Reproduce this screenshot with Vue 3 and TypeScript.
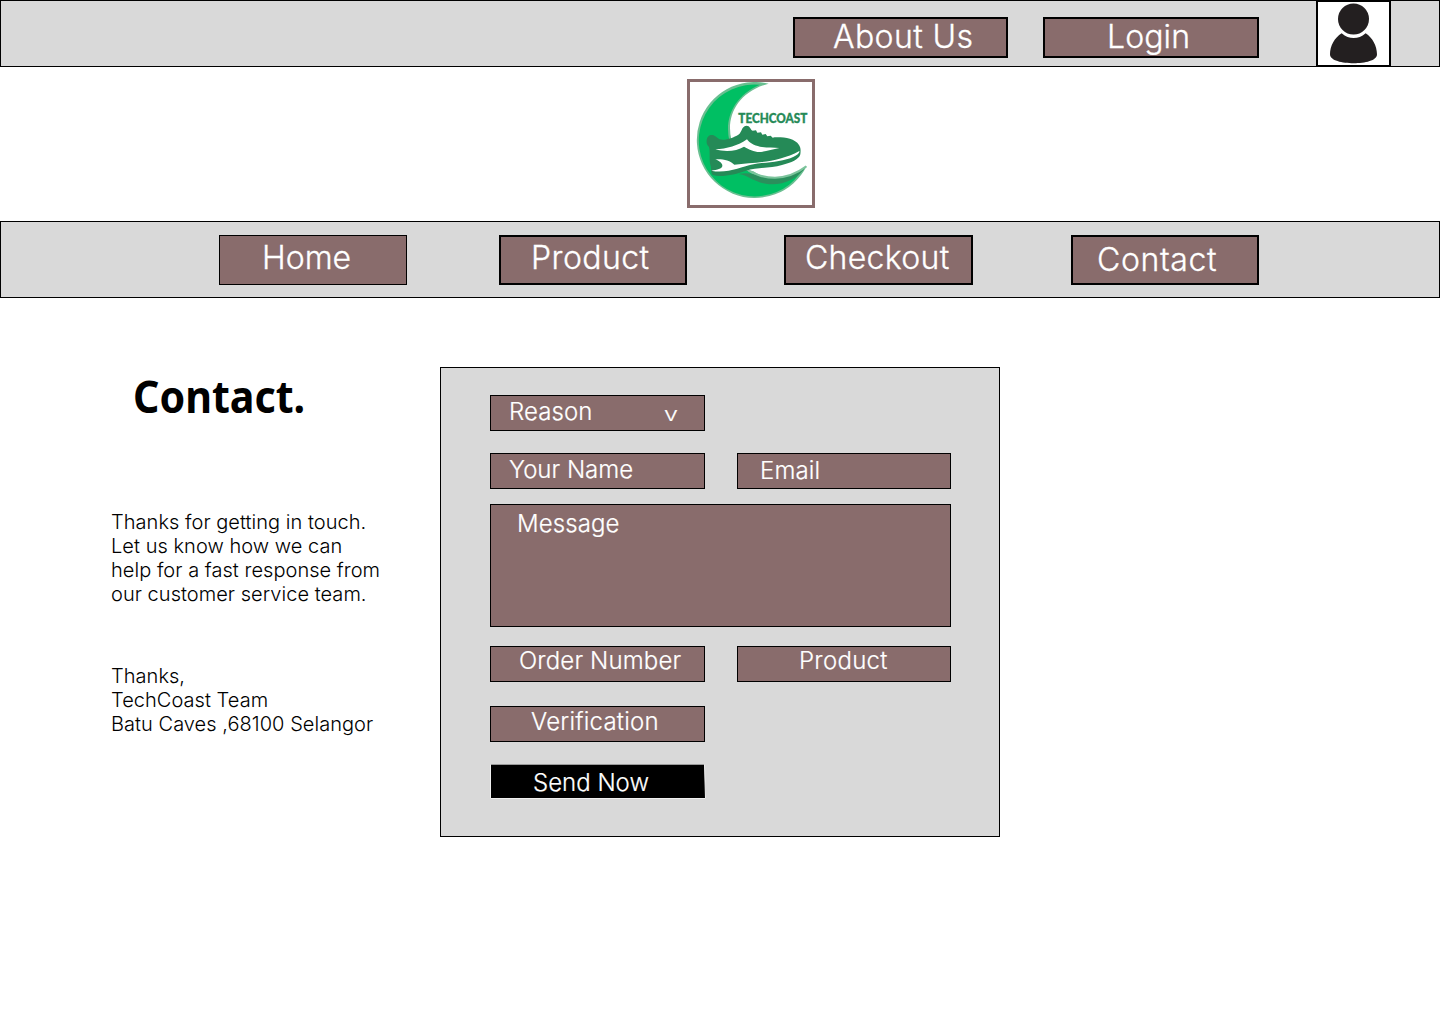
<script setup lang="ts">
interface Item {
  label: string
  cls: string
}

const account: Item[] = [
  { label: 'About Us', cls: 'about' },
  { label: 'Login', cls: 'login' },
]

const nav: Item[] = [
  { label: 'Home', cls: 'home' },
  { label: 'Product', cls: 'product' },
  { label: 'Checkout', cls: 'checkout' },
  { label: 'Contact', cls: 'contact' },
]
</script>

<template>
  <div class="page">
    <header class="topbar">
      <a v-for="item in account" :key="item.label" class="btn" :class="item.cls"><span>{{ item.label }}</span></a>
      <div class="avatar">
        <svg width="71" height="63" viewBox="654 6 213 189">
          <circle cx="760.5" cy="57" r="46.5" fill="#231f20" />
          <path d="M725 100C737 111 748 114 761 114S785 111 797 100C817 113 831 138 831 163C831 182 795 190 761 190S690 182 690 163C690 138 704 113 725 100Z" fill="#231f20" />
        </svg>
      </div>
    </header>

    <div class="brand">
      <div class="logo">
        <svg width="122" height="123" viewBox="30 24 366 369">
          <path d="M266 29A174 174 0 1 0 380 276A142 142 0 0 1 154 196C138 130 170 55 266 29Z" fill="#6abf91" />
          <path d="M240 32A168 168 0 1 0 358 301A142 142 0 0 1 148 200C133 134 160 66 240 32Z" fill="#00bf63" />
          <path d="M200 288C240 272 315 272 362 244L374 278C350 298 320 310 285 310C255 310 238 304 220 292Z" fill="#fff" />
          <path d="M175 300C200 295 225 300 245 308C290 320 340 306 380 276C352 318 305 335 262 330C222 325 205 303 175 300Z" fill="#2b8f5c" />
          <path d="M196 284C220 296 240 311 285 311C325 310 355 295 379 277" fill="none" stroke="#7cc49c" stroke-width="6" />
          <path d="M80 201C80 186 91 181 101 184C109 187 111 193 119 196C137 200 160 191 175 182C187 174 183 158 199 155C211 155 210 166 218 170L228 169L232 176L243 175L247 182L257 180L262 187L272 185L278 191C288 189 284 190 292 190C318 190 345 195 357 213C363 222 362 232 361 241C357 257 334 266 306 273C271 283 231 280 198 290C166 301 125 311 98 303C91 296 95 283 91 272C87 256 91 232 87 219C81 213 79 208 80 201Z" fill="#258a57" />
          <path d="M106 256C125 254 150 258 163 272C221 265 290 268 358 231C360 237 352 243 341 248C306 265 255 264 213 272C187 277 140 300 94 290C112 287 126 284 127 276C128 268 117 260 106 256Z" fill="#fff" />
          <path d="M106 226C140 225 175 215 201 196C208 206 222 215 240 218C258 222 280 220 298 222C275 226 250 235 232 234C215 230 203 224 192 218C170 232 135 234 106 226Z" fill="#fff" />
          <text x="175" y="146" textLength="207" lengthAdjust="spacingAndGlyphs" class="wordmark">TECHCOAST</text>
        </svg>
      </div>
    </div>

    <nav class="navbar">
      <a v-for="item in nav" :key="item.label" class="btn" :class="item.cls"><span>{{ item.label }}</span></a>
    </nav>

    <main class="content">
      <section class="intro">
        <h1>Contact.</h1>
        <p>Thanks for getting in touch.<br />Let us know how we can<br />help for a fast response from<br />our customer service team.</p>
        <p>Thanks,<br />TechCoast Team<br />Batu Caves ,68100 Selangor</p>
      </section>

      <form class="form" @submit.prevent>
        <div class="field reason"><span>Reason</span><span class="caret">v</span></div>
        <div class="row names">
          <div class="field name"><span>Your Name</span></div>
          <div class="field email"><span>Email</span></div>
        </div>
        <div class="field message"><span>Message</span></div>
        <div class="row orders">
          <div class="field order"><span>Order Number</span></div>
          <div class="field item"><span>Product</span></div>
        </div>
        <div class="field verify"><span>Verification</span></div>
        <div class="send">
          <svg width="217" height="36" viewBox="0 0 217 36">
            <path d="M.5 .5H214.5L215.5 34.5H.5Z" fill="#000" stroke="#f0f0f0" />
            <path d="M1 .5H214" stroke="#999" />
          </svg>
          <span>Send Now</span>
        </div>
      </form>
    </main>
  </div>
</template>

<style>
body {
  margin: 0;
  background: #fff;
}
</style>

<style scoped>
.page {
  width: 1440px;
  height: 1024px;
  overflow: hidden;
  font-family: Inter, sans-serif;
  font-weight: 300;
  color: #000;
}
.page * {
  box-sizing: border-box;
}
svg {
  display: block;
}
.topbar,
.navbar {
  display: flex;
  align-items: flex-start;
  background: #d9d9d9;
  border: 1px solid #000;
}
.topbar {
  height: 67px;
  padding-left: 792px;
}
.btn {
  display: flex;
  align-items: flex-start;
  flex: none;
  background: #896c6c;
  border: 2px solid #000;
  color: #fff;
  font-size: 32px;
  line-height: 39px;
  white-space: nowrap;
  -webkit-text-stroke: 0.3px #fff;
}
.topbar .btn {
  height: 41px;
  margin-top: 16px;
}
.topbar .btn span {
  margin-top: -2px;
}
.about {
  width: 215px;
  padding-left: 38px;
  letter-spacing: 0.4px;
}
.login {
  width: 216px;
  margin-left: 35px;
  padding-left: 62px;
  letter-spacing: 0.1px;
}
.avatar {
  width: 75px;
  height: 67px;
  margin: -1px 0 0 57px;
  background: #fff;
  border: 2px solid #000;
}
.brand {
  height: 154px;
  padding: 12px 0 0 687px;
}
.logo {
  width: 128px;
  height: 129px;
  border: 3px solid #896c6c;
  background: #fff;
}
.wordmark {
  font-family: Lato, sans-serif;
  font-size: 37px;
  font-weight: 900;
  fill: #258a57;
  stroke: #258a57;
  stroke-width: 1;
}
.navbar {
  height: 77px;
  padding: 13px 0 0 218px;
}
.navbar .btn {
  width: 188px;
  height: 50px;
}
.navbar .home {
  border-width: 1px;
  padding: 2px 0 0 42px;
}
.navbar .product {
  margin-left: 92px;
  padding: 1px 0 0 30px;
  letter-spacing: 0.42px;
}
.navbar .checkout {
  width: 189px;
  margin-left: 97px;
  padding: 1px 0 0 19px;
  letter-spacing: 0.3px;
}
.navbar .contact {
  margin-left: 98px;
  padding: 3px 0 0 24px;
  letter-spacing: 0.6px;
}
.content {
  display: flex;
  align-items: flex-start;
  padding-top: 69px;
}
.intro {
  width: 440px;
  padding-left: 111px;
}
.intro h1 {
  margin: -1px 0 84px 22px;
  height: 60px;
  font-family: "Noto Sans", sans-serif;
  font-size: 45px;
  font-weight: 700;
  line-height: 60px;
  transform: scaleX(0.915);
  transform-origin: 0 0;
}
.intro p {
  margin: 0 0 58px;
  font-size: 20px;
  line-height: 24px;
  letter-spacing: 0.04px;
  white-space: nowrap;
}
.form {
  width: 560px;
  height: 470px;
  padding: 27px 0 0 49px;
  background: #d9d9d9;
  border: 1px solid #000;
}
.row {
  display: flex;
  gap: 32px;
}
.field {
  display: flex;
  align-items: flex-start;
  width: 215px;
  height: 36px;
  background: #896c6c;
  border: 1px solid #000;
  color: #fff;
  font-size: 24px;
  line-height: 29px;
  letter-spacing: 0.1px;
  white-space: nowrap;
  -webkit-text-stroke: 0.2px #fff;
}
.reason {
  padding: 1px 0 0 18px;
}
.caret {
  margin: 3px 0 0 71px;
  font-size: 20px;
  transform: scaleX(1.25);
  transform-origin: 0 0;
}
.names {
  margin-top: 22px;
}
.name {
  padding: 1px 0 0 18px;
  letter-spacing: 0;
}
.email {
  width: 214px;
  padding: 2px 0 0 22px;
}
.message {
  width: 461px;
  height: 123px;
  margin-top: 15px;
  padding: 4px 0 0 26px;
}
.orders {
  margin-top: 19px;
}
.order {
  padding-left: 28px;
  letter-spacing: 0.15px;
}
.order span,
.item span {
  margin-top: -1px;
}
.item {
  width: 214px;
  padding-left: 61px;
  letter-spacing: 0.3px;
}
.verify {
  margin-top: 24px;
  padding-left: 40px;
  letter-spacing: 0.22px;
}
.send {
  display: grid;
  width: 217px;
  height: 36px;
  margin-top: 22px;
  color: #fff;
  font-size: 24px;
  line-height: 29px;
  -webkit-text-stroke: 0.2px #fff;
}
.send svg,
.send span {
  grid-area: 1 / 1;
}
.send span {
  padding: 4px 0 0 43px;
}
</style>
